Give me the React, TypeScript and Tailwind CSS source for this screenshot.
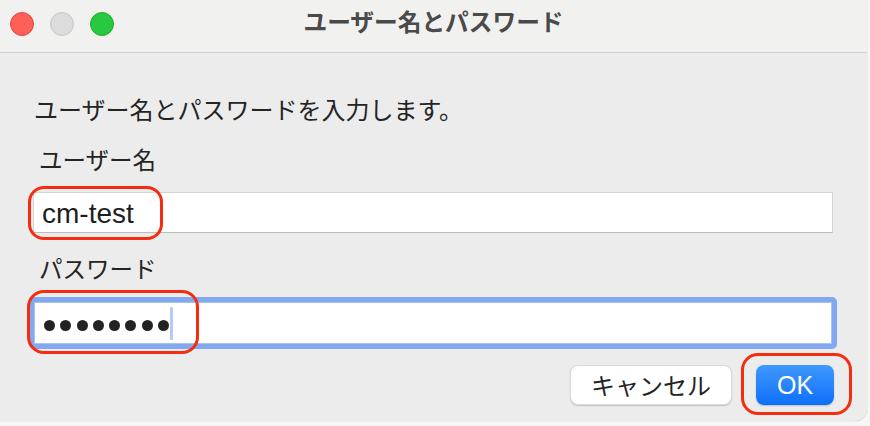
import React from "react";

const jp = { fontFamily: '"Noto Sans CJK JP", "Noto Sans", sans-serif' };
const lat = { fontFamily: '"Liberation Sans", Arial, sans-serif' };

export default function App() {
  return (
    <div className="relative w-[870px] h-[426px] bg-[#f6f6f6] overflow-hidden">
      <div className="w-[867px] h-[421px] bg-[#ececec] rounded-br-[12px] flex flex-col shadow-[0_0_1px_rgba(0,0,0,0.35)]">
        {/* Title bar */}
        <div className="h-[53px] shrink-0 bg-[#f1f1f0] border-b border-[#d2d2d2] grid grid-cols-[1fr_auto_1fr]">
          <div className="flex items-start gap-[16px] pl-[10px] pt-[12px]">
            <div className="w-[24px] h-[24px] rounded-full bg-[#fe5f57] border border-[#e2463f]" />
            <div className="w-[24px] h-[24px] rounded-full bg-[#dcdcdc] border border-[#c6c6c6]" />
            <div className="w-[24px] h-[24px] rounded-full bg-[#28c840] border border-[#1daa2f]" />
          </div>
          <div
            className="pt-[9px] text-[23.7px] leading-[24px] font-bold text-[#4a4a4a]"
            style={jp}
          >
            ユーザー名とパスワード
          </div>
          <div />
        </div>

        {/* Body */}
        <div className="flex flex-col text-[#242424]" style={jp}>
          <div className="mt-[44px] ml-[34px] text-[24px] leading-[24px]">
            ユーザー名とパスワードを入力します。
          </div>
          <div className="mt-[26px] ml-[39px] text-[23.5px] leading-[24px]">
            ユーザー名
          </div>
          <div className="mt-[21px] ml-[33px] w-[800px] h-[41px] bg-white border border-[#d4d4d4] border-b-[#bcbcbc] flex items-center pl-[8px] pt-[3px]">
            <span className="text-[28px] leading-[28px] text-[#1e1e1e]" style={lat}>
              cm-test
            </span>
          </div>
          <div className="mt-[23px] ml-[39px] text-[23.5px] leading-[24px]">
            パスワード
          </div>
          <div className="mt-[17px] ml-[29px] w-[808px] h-[52px] rounded-[5px] bg-[#82a8ef] p-[5px]">
            <div className="w-full h-full bg-white border border-[#a9c1f0] flex items-center pl-[9px]">
              <div className="flex gap-[5.3px] pt-[5px]">
                {Array.from({ length: 8 }).map((_, i) => (
                  <div key={i} className="w-[11px] h-[11px] rounded-full bg-[#222222]" />
                ))}
              </div>
              <div className="ml-[1px] w-[3px] h-[33px] rounded-[1px] bg-[#b3cbf6]" />
            </div>
          </div>
          <div className="mt-[16px] flex justify-end gap-[24px] pr-[33px]">
            <div className="w-[162px] h-[40px] rounded-[8px] bg-white border border-[#dadada] shadow-[0_1px_1.5px_rgba(0,0,0,0.18)] flex items-center justify-center text-[24px] leading-[24px] text-[#242424]">
              キャンセル
            </div>
            <div
              className="w-[78px] h-[40px] rounded-[8px] bg-gradient-to-b from-[#3f98fd] to-[#0a6ff8] shadow-[0_1px_1.5px_rgba(0,0,0,0.2)] flex items-center justify-center text-[25px] leading-[25px] text-white"
              style={lat}
            >
              OK
            </div>
          </div>
        </div>
      </div>

      {/* Red annotation rings */}
      <div className="absolute left-[28px] top-[186px] w-[135px] h-[54px] rounded-[16px] border-[3.5px] border-[#f42c10]" />
      <div className="absolute left-[27px] top-[290px] w-[172px] h-[64px] rounded-[17px] border-[3.5px] border-[#f42c10]" />
      <div className="absolute left-[741px] top-[353px] w-[111px] h-[62px] rounded-[17px] border-[3.5px] border-[#f42c10]" />
    </div>
  );
}
